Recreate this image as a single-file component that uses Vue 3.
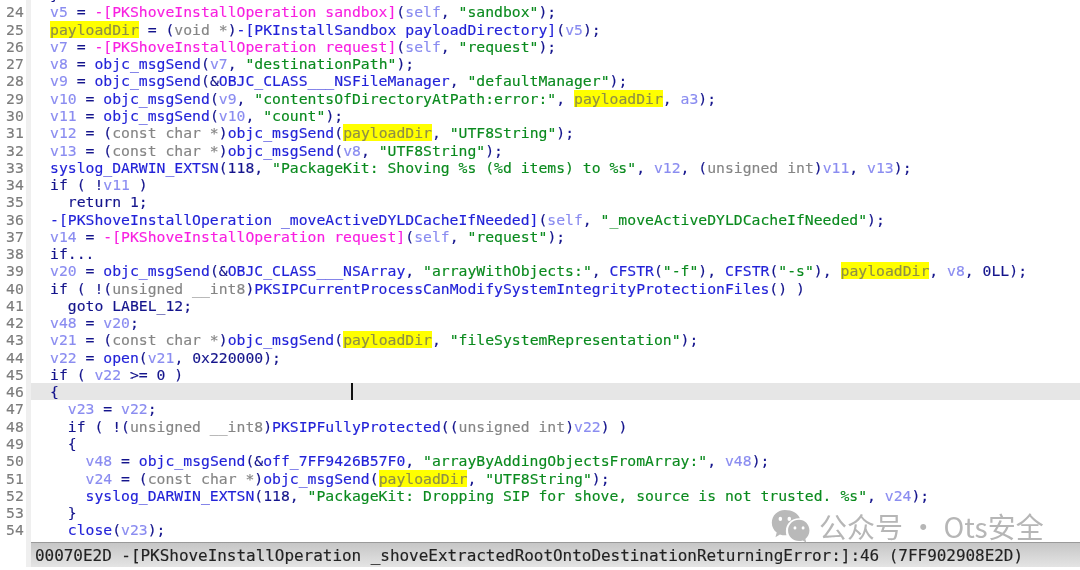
<script setup>
const source = [
  ['', '{p|}}'],
  [24, '{v|v5} = {m|-[PKShoveInstallOperation sandbox]}({v|self}, {s|"sandbox"});'],
  [25, '{h|payloadDir} = ({t|void *}){f|-[PKInstallSandbox payloadDirectory]}({v|v5});'],
  [26, '{v|v7} = {m|-[PKShoveInstallOperation request]}({v|self}, {s|"request"});'],
  [27, '{v|v8} = {f|objc_msgSend}({v|v7}, {s|"destinationPath"});'],
  [28, '{v|v9} = {f|objc_msgSend}(&{f|OBJC_CLASS___NSFileManager}, {s|"defaultManager"});'],
  [29, '{v|v10} = {f|objc_msgSend}({v|v9}, {s|"contentsOfDirectoryAtPath:error:"}, {h|payloadDir}, {v|a3});'],
  [30, '{v|v11} = {f|objc_msgSend}({v|v10}, {s|"count"});'],
  [31, '{v|v12} = ({t|const char *}){f|objc_msgSend}({h|payloadDir}, {s|"UTF8String"});'],
  [32, '{v|v13} = ({t|const char *}){f|objc_msgSend}({v|v8}, {s|"UTF8String"});'],
  [33, '{f|syslog_DARWIN_EXTSN}(118, {s|"PackageKit: Shoving %s (%d items) to %s"}, {v|v12}, ({t|unsigned int}){v|v11}, {v|v13});'],
  [34, 'if ( !{v|v11} )'],
  [35, '  return 1;'],
  [36, '{f|-[PKShoveInstallOperation _moveActiveDYLDCacheIfNeeded]}({v|self}, {s|"_moveActiveDYLDCacheIfNeeded"});'],
  [37, '{v|v14} = {m|-[PKShoveInstallOperation request]}({v|self}, {s|"request"});'],
  [38, 'if...'],
  [39, '{v|v20} = {f|objc_msgSend}(&{f|OBJC_CLASS___NSArray}, {s|"arrayWithObjects:"}, {f|CFSTR}({s|"-f"}), {f|CFSTR}({s|"-s"}), {h|payloadDir}, {v|v8}, 0LL);'],
  [40, 'if ( !({t|unsigned __int8}){f|PKSIPCurrentProcessCanModifySystemIntegrityProtectionFiles}() )'],
  [41, '  goto LABEL_12;'],
  [42, '{v|v48} = {v|v20};'],
  [43, '{v|v21} = ({t|const char *}){f|objc_msgSend}({h|payloadDir}, {s|"fileSystemRepresentation"});'],
  [44, '{v|v22} = {f|open}({v|v21}, 0x220000);'],
  [45, 'if ( {v|v22} >= 0 )'],
  [46, '{'],
  [47, '  {v|v23} = {v|v22};'],
  [48, '  if ( !({t|unsigned __int8}){f|PKSIPFullyProtected}(({t|unsigned int}){v|v22}) )'],
  [49, '  {'],
  [50, '    {v|v48} = {f|objc_msgSend}(&{f|off_7FF9426B57F0}, {s|"arrayByAddingObjectsFromArray:"}, {v|v48});'],
  [51, '    {v|v24} = ({t|const char *}){f|objc_msgSend}({h|payloadDir}, {s|"UTF8String"});'],
  [52, '    {f|syslog_DARWIN_EXTSN}(118, {s|"PackageKit: Dropping SIP for shove, source is not trusted. %s"}, {v|v24});'],
  [53, '  }'],
  [54, '  {f|close}({v|v23});'],
  ['', '  {v|v26} = {v|v48};'],
]

function tokenize(text) {
  const out = []
  const re = /\{([a-z])\|(.*?)\}(?!\})/g
  let last = 0
  let match
  while ((match = re.exec(text))) {
    if (match.index > last) out.push({ cls: '', text: text.slice(last, match.index) })
    out.push({ cls: match[1], text: match[2] })
    last = match.index + match[0].length
  }
  if (last < text.length) out.push({ cls: '', text: text.slice(last) })
  return out
}

const rows = source.map(([num, text]) => ({ num, tokens: tokenize(text), active: num === 46 }))
</script>

<template>
  <div class="window">
    <div class="editor">
      <div class="rows">
        <div v-for="(row, i) in rows" :key="i" class="row" :class="{ active: row.active }">
          <div class="num">{{ row.num }}</div>
          <div class="code"><span v-for="(tok, j) in row.tokens" :key="j" :class="tok.cls">{{ tok.text }}</span></div>
          <i v-if="row.active" class="caret"></i>
        </div>
      </div>
    </div>
    <div class="status-wrap">
      <div class="gutter-end"></div>
      <div class="status">00070E2D -[PKShoveInstallOperation _shoveExtractedRootOntoDestinationReturningError:]:46 (7FF902908E2D)</div>
    </div>
    <div class="mark">
      <svg class="wechat" width="39" height="34" viewBox="0 0 48 36" preserveAspectRatio="none">
        <path fill="#b9b9b9" d="M17 1C8 1 1 7 1 14.500c0 4.300 2.400 8 6 10.500L5.500 30l5.500-3c2 .6 4 .9 6 .9.700 0 1.300 0 2-.1-.5-1.500-.7-3-.7-4.500 0-7.700 7.200-13.500 15.900-13.500h1.300C33.500 4.500 26 1 17 1z"/>
        <path fill="#b9b9b9" d="M34.500 11.500c-7.500 0-13.500 5-13.500 11.300S27 34 34.500 34c1.600 0 3.200-.2 4.700-.7l4.300 2.500-1.200-4.100c3-2.200 5-5.400 5-9 0-6.200-5.800-11.200-12.800-11.200z"/>
        <circle cx="11.500" cy="10.500" r="2.200" fill="#fff"/>
        <circle cx="22.500" cy="10.500" r="2.200" fill="#fff"/>
        <circle cx="29.500" cy="20" r="1.800" fill="#fff"/>
        <circle cx="39.500" cy="20" r="1.800" fill="#fff"/>
      </svg>
      <span class="mark-text">公众号 · Ots安全</span>
    </div>
  </div>
</template>

<style>
html, body { margin: 0; background: #fff; }
</style>

<style scoped>
.window {
  position: relative;
  width: 1080px;
  height: 570px;
  overflow: hidden;
  display: flex;
  flex-direction: column;
  background: #fff;
  font-family: "DejaVu Sans Mono", "Liberation Mono", monospace;
}
.editor {
  height: 542px;
  flex: none;
  overflow: hidden;
}
.rows {
  margin-top: -13.9px;
  filter: blur(0.4px);
}
.row {
  position: relative;
  display: flex;
  height: 17.27px;
  line-height: 17.27px;
  font-size: 14.75px;
  color: #14148c;
  -webkit-text-stroke: 0.15px currentColor;
}
.row.active .code {
  background: #e6e6e6;
}
.num {
  flex: none;
  width: 20px;
  padding-left: 6px;
  border-right: 5px solid #efefef;
  color: #7c7c7c;
  background: #fff;
}
.code {
  flex: 1;
  padding-left: 19px;
  white-space: pre;
}
.caret {
  position: absolute;
  left: 351px;
  top: 0;
  width: 2px;
  height: 17px;
  background: #111;
}
.v { color: #8a8cf0; }
.f { color: #2222d8; }
.s { color: #0a8a1e; }
.t { color: #858585; }
.m { color: #f81fe0; }
.p { color: #14148c; }
.h { color: #8f8f45; background: #ffff00; }
.status-wrap {
  flex: none;
  display: flex;
  height: 25px;
}
.gutter-end {
  flex: none;
  width: 26px;
  border-right: 5px solid #efefef;
}
.status {
  flex: 1;
  box-sizing: border-box;
  padding-left: 4px;
  border-top: 1px solid #9a9a9a;
  background: linear-gradient(#c6c6c6, #e4e4e4);
  color: #222;
  font-size: 16px;
  letter-spacing: -0.04px;
  line-height: 25px;
  white-space: pre;
  -webkit-text-stroke: 0.15px currentColor;
  filter: blur(0.35px);
}
.mark {
  position: absolute;
  left: 771px;
  top: 509px;
  display: flex;
  align-items: center;
  gap: 9px;
  color: #b6b6b6;
  filter: blur(0.4px);
}
.mark-text {
  font-family: "Noto Sans CJK SC", sans-serif;
  font-size: 28px;
  line-height: 34px;
  white-space: nowrap;
}
</style>
